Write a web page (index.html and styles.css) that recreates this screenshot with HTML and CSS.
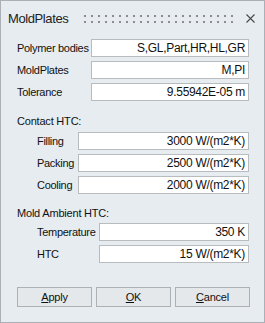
FILE: index.html
```html
<!DOCTYPE html>
<html lang="en">
<head>
  <meta charset="UTF-8">
  <title>MoldPlates</title>
  <link rel="stylesheet" href="styles.css">
</head>
<body>

<div class="dialog">
  <div class="titlebar">
    <span class="title">MoldPlates</span>
    <span class="grip"></span>
    <svg class="close" width="9" height="9" viewBox="0 0 9 9">
      <path d="M0.5 0.5 L8.5 8.5 M8.5 0.5 L0.5 8.5" stroke="#4a4a4a" stroke-width="1.1" fill="none"/>
    </svg>
  </div>

  <div class="content">
    <div class="rows main">
      <div class="row"><label>Polymer bodies</label><div class="field">S,GL,Part,HR,HL,GR</div></div>
      <div class="row"><label>MoldPlates</label><div class="field">M,PI</div></div>
      <div class="row"><label>Tolerance</label><div class="field">9.55942E-05 m</div></div>
    </div>

    <div class="heading">Contact HTC:</div>
    <div class="rows contact">
      <div class="row"><label>Filling</label><div class="field">3000 W/(m2*K)</div></div>
      <div class="row"><label>Packing</label><div class="field">2500 W/(m2*K)</div></div>
      <div class="row"><label>Cooling</label><div class="field">2000 W/(m2*K)</div></div>
    </div>

    <div class="heading ambient">Mold Ambient HTC:</div>
    <div class="rows mold">
      <div class="row"><label>Temperature</label><div class="field">350 K</div></div>
      <div class="row"><label>HTC</label><div class="field">15 W/(m2*K)</div></div>
    </div>

    <div class="buttons">
      <button><u>A</u>pply</button>
      <button><u>O</u>K</button>
      <button><u>C</u>ancel</button>
    </div>
  </div>
</div>

</body>
</html>
```

FILE: styles.css
```css
body {
  margin: 0;
  font-family: "Liberation Sans", Arial, sans-serif;
  color: #111;
}
.dialog {
  width: 265px;
  height: 323px;
  box-sizing: border-box;
  border: 1px solid #aab0b5;
  background: #e6ecf0;
}
.titlebar {
  height: 35px;
  display: flex;
  align-items: center;
  padding: 0 9px 0 7px;
}
.title {
  font-size: 13px;
  letter-spacing: -0.4px;
  color: #222;
  width: 76px;
}
.grip {
  flex: 1;
  height: 8px;
  margin-right: 8px;
  background-image: linear-gradient(#8c8c8c, #8c8c8c);
  background-size: 2px 2px;
  background-repeat: no-repeat;
  background: radial-gradient(circle at 1px 1px, #8c8c8c 1px, transparent 1.2px) 0 0 / 7px 6px;
}
.close {
  display: block;
}
.content {
  padding: 3px 15px 0 15px;
  display: flex;
  flex-direction: column;
}
.rows {
  display: flex;
  flex-direction: column;
  gap: 4px;
}
.row {
  display: grid;
  grid-template-columns: 75px 1fr;
  height: 18px;
  align-items: center;
}
.contact .row {
  grid-template-columns: 42px 1fr;
}
.mold .row {
  grid-template-columns: 63px 1fr;
}
.contact,
.mold {
  padding-left: 20px;
}
label {
  font-size: 11px;
  letter-spacing: -0.3px;
  padding-left: 1px;
}
.field {
  height: 18px;
  box-sizing: border-box;
  border: 1px solid #b8bcbf;
  background: #fff;
  font-size: 12px;
  letter-spacing: -0.3px;
  text-align: right;
  padding-right: 3px;
  line-height: 16px;
}
.heading {
  font-size: 11px;
  letter-spacing: -0.2px;
  height: 16px;
  line-height: 16px;
  margin: 12px 0 3px 1px;
}
.heading.ambient {
  margin-top: 11px;
  margin-bottom: 2px;
}
.buttons {
  display: grid;
  grid-template-columns: repeat(3, 75px);
  gap: 4px;
  margin-top: 24px;
  padding-left: 1px;
}
button {
  height: 20px;
  border: 1px solid #adb1b4;
  background: #e4e8eb;
  font-family: "Liberation Sans", Arial, sans-serif;
  font-size: 11px;
  letter-spacing: -0.2px;
  color: #111;
  padding: 0;
}
```
